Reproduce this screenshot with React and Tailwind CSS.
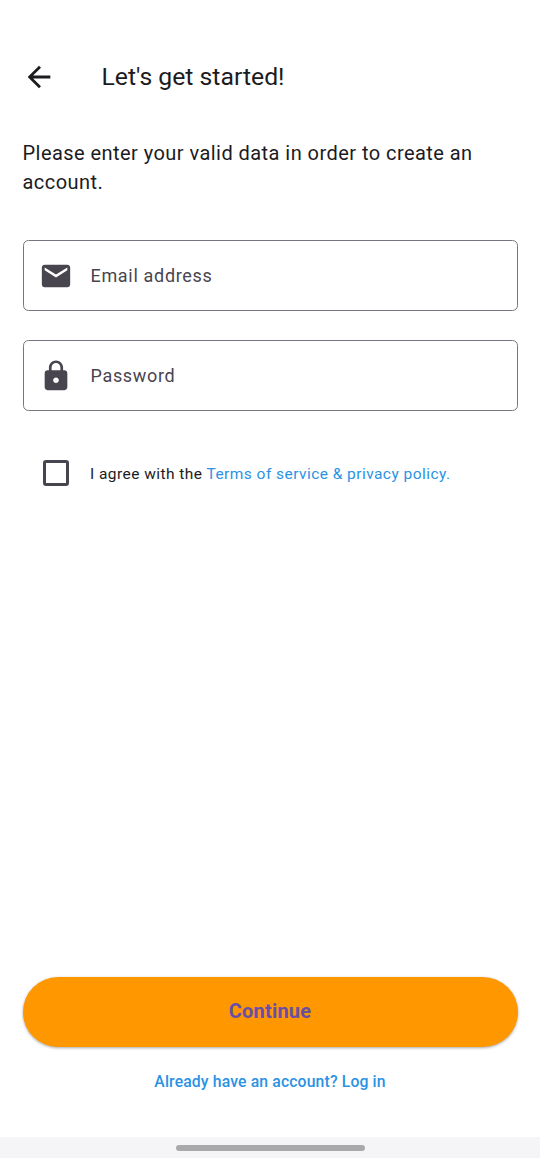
const Icon = ({ d, className }) => (
  <svg viewBox="0 0 24 24" className={className} fill="currentColor" aria-hidden="true"><path d={d} /></svg>
);

const BACK = "M20 11H7.83l5.59-5.59L12 4l-8 8 8 8 1.41-1.41L7.83 13H20v-2z";
const MAIL = "M20 4H4c-1.1 0-1.99.9-1.99 2L2 18c0 1.1.9 2 2 2h16c1.1 0 2-.9 2-2V6c0-1.1-.9-2-2-2zm0 4l-8 5-8-5V6l8 5 8-5v2z";
const LOCK = "M18 8h-1V6c0-2.76-2.24-5-5-5S7 3.24 7 6v2H6c-1.1 0-2 .9-2 2v10c0 1.1.9 2 2 2h12c1.1 0 2-.9 2-2V10c0-1.1-.9-2-2-2zm-6 9c-1.1 0-2-.9-2-2s.9-2 2-2 2 .9 2 2-.9 2-2 2zm3.1-9H8.9V6c0-1.71 1.39-3.1 3.1-3.1 1.71 0 3.1 1.39 3.1 3.1v2z";

const Field = ({ icon, label }) => (
  <label className="flex h-[71.5px] items-center rounded-[5.5px] border-[1.4px] border-[#79747e] pl-[15.4px] text-[#49454f]">
    <Icon d={icon} className="size-[34px] shrink-0" />
    <span className="ml-[17.6px] text-[18px] tracking-[0.68px]">{label}</span>
  </label>
);

export default function App() {
  return (
    <div className="flex h-[1158px] w-[540px] flex-col bg-white font-[Roboto,sans-serif] text-[#1c1b1f]">
      <header className="mt-[38px] flex h-[78px] items-center pl-[22px]">
        <Icon d={BACK} className="-mt-px size-[34px]" />
        <h1 className="ml-[45.5px] pb-px text-[24.75px]">Let's get started!</h1>
      </header>
      <main className="flex flex-1 flex-col px-[22.5px]">
        <p className="mt-[22.5px] text-[20px] leading-[29.5px] tracking-[0.45px]">
          Please enter your valid data in order to create an<br />account.
        </p>
        <div className="mt-[42.4px] flex flex-col gap-[28.5px]">
          <Field icon={MAIL} label="Email address" />
          <Field icon={LOCK} label="Password" />
        </div>
        <div className="mt-[49px] flex items-center pl-[20.5px]">
          <span className="size-[26px] rounded-[3px] border-[3px] border-[#49454f]" />
          <span className="ml-[21px] pt-[2px] text-[15.5px] tracking-[0.45px]">
            I agree with the <a className="text-[#2b92e4]">Terms of service &amp; privacy policy.</a>
          </span>
        </div>
        <button className="mt-auto h-[70.5px] w-full rounded-full bg-[#ff9800] pb-[2px] text-[20px] font-bold tracking-[0.2px] text-[#6750a4] shadow-[0_1px_3px_rgba(0,0,0,0.35)]">Continue</button>
        <a className="mt-[23px] mb-[43px] text-center text-[15.75px] leading-[24px] font-medium tracking-[0.14px] text-[#2b92e4]">Already have an account? Log in</a>
      </main>
      <footer className="flex h-[21px] items-center justify-center bg-[#f5f5f7]">
        <span className="h-[6px] w-[189px] rounded-full bg-[#a9a9ab]" />
      </footer>
    </div>
  );
}
